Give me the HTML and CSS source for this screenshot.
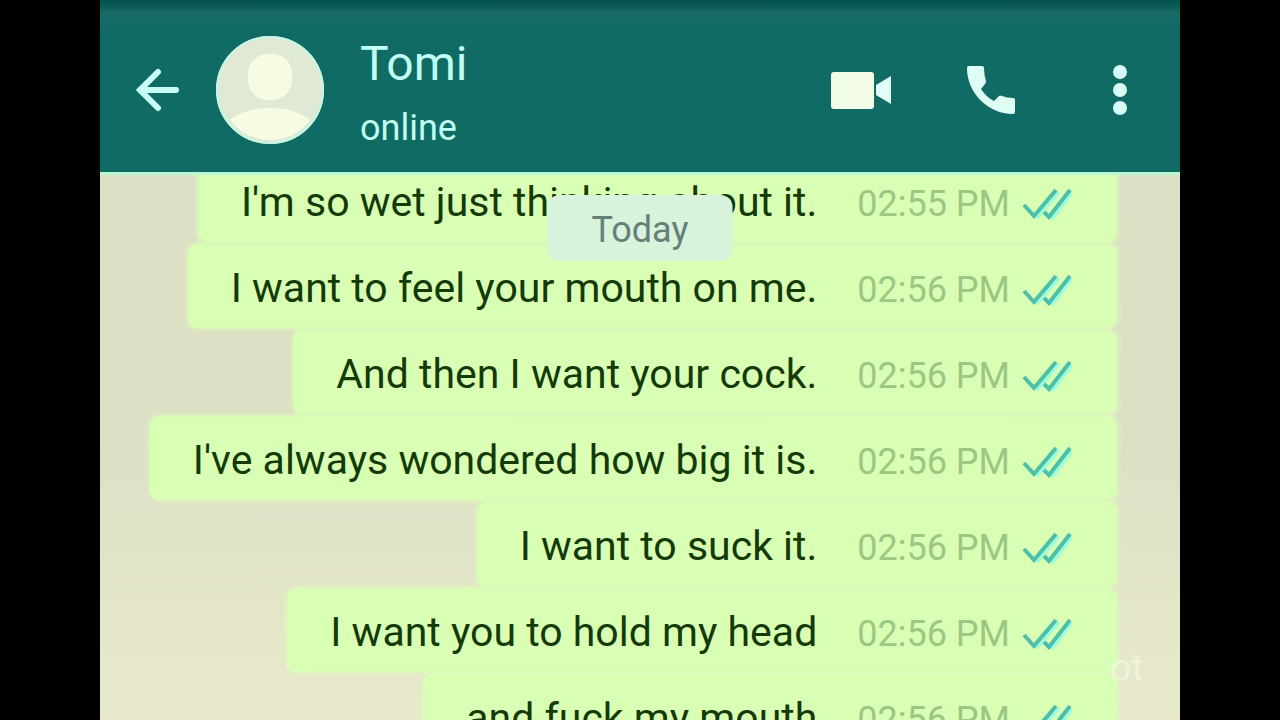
FILE: index.html
```
<!DOCTYPE html>
<html lang="en">
<head>
    <meta charset="UTF-8">
    <meta name="viewport" content="width=device-width, initial-scale=1">
    <title>Tomi</title>
    <link rel="stylesheet" href="styles.css">
</head>
<body>
    <svg class="defs" aria-hidden="true">
        <symbol id="ticks" viewBox="0 0 50 34">
            <path d="M15 31L37 5M30 32L50 6" fill="none" stroke="#96ffdf" stroke-width="3"/>
            <path d="M2 18L12 29L34 3M22 25L27 30L48 3" fill="none" stroke="#4dbfa6" stroke-width="4"/>
        </symbol>
    </svg>

    <div class="phone">
        <header class="header">
            <button class="icon-button" aria-label="Back">
                <svg width="44" height="44" viewBox="0 0 44 44">
                    <path d="M40 22H4M22 4L4 22L22 40" fill="none" stroke="#c8fff4" stroke-width="6" stroke-linecap="round"/>
                </svg>
            </button>
            <svg class="avatar" viewBox="0 0 108 108">
                <circle cx="54" cy="54" r="54" fill="#dfe9d4"/>
                <path d="M14 84C24 76 38 72 54 72S84 76 94 84A50 50 0 0 1 14 84Z" fill="#f6fce4"/>
                <rect x="32" y="18" width="44" height="46" rx="20" fill="#f6fce4"/>
                <circle cx="54" cy="54" r="53" fill="none" stroke="#c5f7e4" stroke-width="2"/>
            </svg>
            <div class="contact">
                <h1 class="name">Tomi</h1>
                <p class="status">online</p>
            </div>
            <div class="actions">
                <button class="icon-button" aria-label="Video call">
                    <svg width="62" height="52" viewBox="0 0 62 52">
                        <rect x="1" y="8" width="43" height="37" rx="3" fill="#f3fce6"/>
                        <path d="M46 21L61 12V40L46 31Z" fill="#e0fff4"/>
                    </svg>
                </button>
                <button class="icon-button" aria-label="Voice call">
                    <svg width="50" height="52" viewBox="0 0 50 52">
                        <path d="M3 2H16Q18 2 18 4Q18 11 20 17Q20 19 19 20L15 25Q20 33 28 37L33 32Q34 31 36 32Q41 34 47 34Q49 34 49 36V48Q49 50 47 50C22 50 1 29 1 4Q1 2 3 2Z" fill="#e0fff4"/>
                    </svg>
                </button>
                <button class="icon-button more" aria-label="More options">
                    <svg width="16" height="52" viewBox="0 0 16 52">
                        <g fill="#d8fff6">
                            <circle cx="8" cy="8" r="7"/>
                            <circle cx="8" cy="26" r="7"/>
                            <circle cx="8" cy="44" r="7"/>
                        </g>
                    </svg>
                </button>
            </div>
        </header>

        <main class="chat">
            <div class="date">Today</div>
            <div class="message">
                <p class="text">I'm so wet just thinking about it.</p>
                <time class="time">02:55 PM</time>
                <svg class="ticks"><use href="#ticks"/></svg>
            </div>
            <div class="message">
                <p class="text">I want to feel your mouth on me.</p>
                <time class="time">02:56 PM</time>
                <svg class="ticks"><use href="#ticks"/></svg>
            </div>
            <div class="message">
                <p class="text">And then I want your cock.</p>
                <time class="time">02:56 PM</time>
                <svg class="ticks"><use href="#ticks"/></svg>
            </div>
            <div class="message">
                <p class="text">I've always wondered how big it is.</p>
                <time class="time">02:56 PM</time>
                <svg class="ticks"><use href="#ticks"/></svg>
            </div>
            <div class="message">
                <p class="text">I want to suck it.</p>
                <time class="time">02:56 PM</time>
                <svg class="ticks"><use href="#ticks"/></svg>
            </div>
            <div class="message">
                <p class="text">I want you to hold my head</p>
                <time class="time">02:56 PM</time>
                <svg class="ticks"><use href="#ticks"/></svg>
            </div>
            <div class="message">
                <p class="text">and fuck my mouth</p>
                <time class="time">02:56 PM</time>
                <svg class="ticks"><use href="#ticks"/></svg>
            </div>
            <span class="watermark">ot</span>
        </main>
    </div>
</body>
</html>
```
FILE: styles.css
```
:root {
    --header-color: #116b65;
    --bubble-color: #d9ffb5;
    --light-text: #c0fff2;
}
* {
    box-sizing: border-box;
}
body {
    margin: 0;
    background-color: #000;
    font-family: Roboto, sans-serif;
}
h1,
p {
    margin: 0;
    font-weight: 400;
}
.defs {
    position: absolute;
    width: 0;
    height: 0;
}
.phone {
    display: flex;
    flex-direction: column;
    height: 100vh;
    max-width: 1080px;
    margin: 0 auto;
    overflow: hidden;
}
.header {
    display: flex;
    align-items: center;
    flex-shrink: 0;
    padding: 8px 52px 0 36px;
    border-bottom: 3px solid #b9f7d4;
    background: linear-gradient(#065450, #0a5a56 6px, #1b6a65 12px, var(--header-color) 28px);
    color: var(--light-text);
}
.icon-button {
    display: flex;
    padding: 0;
    border: 0;
    background: none;
    cursor: pointer;
}
.avatar {
    width: 108px;
    height: 108px;
    margin-left: 36px;
}
.contact {
    margin-left: 36px;
    padding: 24px 0 12px;
}
.name {
    font-size: 48px;
    line-height: 64px;
}
.status {
    font-size: 36px;
    line-height: 64px;
}
.actions {
    display: flex;
    gap: 74px;
    margin-left: auto;
}
.more {
    margin-left: 22px;
}
.chat {
    position: relative;
    display: flex;
    flex: 1;
    flex-direction: column;
    align-items: flex-end;
    gap: 4px;
    min-height: 0;
    padding-right: 64px;
    overflow: hidden;
    background: linear-gradient(#dddfc6, #dee0c5 50%, #e8e9cc);
}
.message {
    display: flex;
    align-items: center;
    flex-shrink: 0;
    height: 82px;
    padding: 4px 44px 0 42px;
    border-radius: 8px;
    background-color: var(--bubble-color);
    box-shadow: 0 0 4px 2px var(--bubble-color);
}
/* first message is scrolled partly under the header */
.date + .message {
    margin-top: -16px;
}
.text {
    color: #143a08;
    font-size: 41px;
    line-height: 48px;
}
.time {
    margin: 4px 0 0 40px;
    color: #9dc683;
    font-size: 36px;
    line-height: 48px;
}
.ticks {
    width: 50px;
    height: 34px;
    margin: 4px 0 0 12px;
}
.date {
    position: absolute;
    top: 20px;
    left: 50%;
    padding: 10px 44px 6px;
    border-radius: 12px;
    background-color: #d8f2dc;
    color: #648079;
    font-size: 36px;
    line-height: 50px;
    transform: translateX(-50%);
}
.watermark {
    position: absolute;
    right: 36px;
    bottom: 28px;
    color: #f4f8e0;
    font-size: 38px;
    line-height: 48px;
    opacity: 0.7;
}
```
